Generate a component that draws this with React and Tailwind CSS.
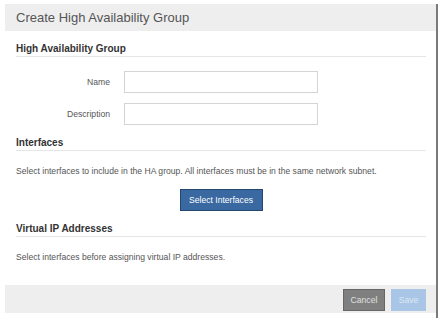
const Heading = ({ children }) => (
    <div className="text-[10px] leading-[12px] font-bold text-[#333] pb-[1px] border-b border-[#e6e6e6]">
        {children}
    </div>
)

const Field = ({ label, className }) => (
    <div className={`flex items-center ${className}`}>
        <div className="w-[94px] text-right text-[8.6px] text-[#555]">{label}</div>
        <input className="ml-[14px] w-[194px] h-[22px] border border-[#d4d4d4] bg-white outline-none" />
    </div>
)

export default function App() {
    return (
        <div className="w-[444px] h-[318px] bg-white pt-[4px] pl-[5px] font-['Liberation_Sans',Arial,sans-serif]">
            <div className="w-[433px] h-[314px] border-r-2 border-[#7a7a7a] flex flex-col">

                <div className="h-[27px] bg-[#eeeeee] flex items-center pl-[11px] text-[13px] text-[#555]">
                    Create High Availability Group
                </div>

                <div className="flex-1 pl-[11px] pr-[10px] pt-[12px]">
                    <Heading>High Availability Group</Heading>

                    <Field label="Name" className="mt-[14px]" />
                    <Field label="Description" className="mt-[10px]" />

                    <div className="mt-[12px]">
                        <Heading>Interfaces</Heading>
                    </div>
                    <p className="mt-[14px] text-[8.6px] leading-[12px] text-[#555]">
                        Select interfaces to include in the HA group. All interfaces must be in the same network subnet.
                    </p>
                    <div className="flex justify-center mt-[12px]">
                        <button className="w-[83px] h-[22px] bg-[#3a68a1] border border-[#24476f] text-white text-[8.6px]">
                            Select Interfaces
                        </button>
                    </div>

                    <div className="mt-[12px]">
                        <Heading>Virtual IP Addresses</Heading>
                    </div>
                    <p className="mt-[14px] text-[8.6px] leading-[12px] text-[#555]">
                        Select interfaces before assigning virtual IP addresses.
                    </p>
                </div>

                <div className="h-[28px] bg-[#eeeeee] flex items-start justify-end gap-[6px] pt-[4px] pr-[10px] mb-[5px]">
                    <button className="w-[42px] h-[22px] bg-[#7f7f7f] border border-[#666] text-[#e0e0e0] text-[8.6px]">
                        Cancel
                    </button>
                    <button className="w-[35px] h-[22px] bg-[#a9c6e6] text-[#dde8f5] text-[8.6px]">
                        Save
                    </button>
                </div>

            </div>
        </div>
    )
}
